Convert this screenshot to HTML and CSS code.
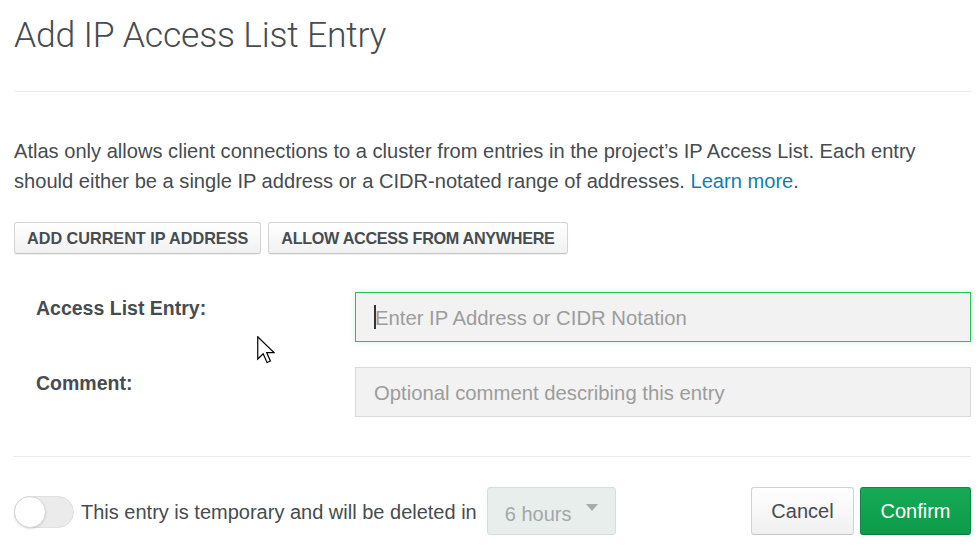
FILE: index.html
```html
<!DOCTYPE html>
<html>
<head>
<meta charset="utf-8">
<link rel="stylesheet" href="styles.css">
</head>
<body>
<div class="modal">
  <h1 class="title">Add IP Access List Entry</h1>
  <hr class="divider">
  <p class="desc">Atlas only allows client connections to a cluster from entries in the project’s IP Access List. Each entry should either be a single IP address or a CIDR-notated range of addresses. <a class="link" href="#">Learn more</a>.</p>
  <div class="actions">
    <button class="btn">ADD CURRENT IP ADDRESS</button>
    <button class="btn btn-narrow">ALLOW ACCESS FROM ANYWHERE</button>
  </div>
  <div class="form">
    <div class="row">
      <label class="label">Access List Entry:</label>
      <div class="field focused"><span class="caret"></span><span class="ph">Enter IP Address or CIDR Notation</span></div>
    </div>
    <div class="row">
      <label class="label">Comment:</label>
      <div class="field"><span class="ph">Optional comment describing this entry</span></div>
    </div>
  </div>
  <hr class="divider">
  <div class="footer">
    <div class="temp">
      <span class="toggle"><span class="knob"></span></span>
      <span class="temp-text">This entry is temporary and will be deleted in</span>
      <span class="select"><span class="sel-val">6 hours</span><span class="sel-arrow"></span></span>
    </div>
    <div class="footer-btns">
      <button class="fbtn cancel">Cancel</button>
      <button class="fbtn confirm">Confirm</button>
    </div>
  </div>
  <svg class="pointer" width="18" height="28" viewBox="0 0 18 28"><path d="M0.75 0.75 L0.75 23 L6.2 17.8 L10 26.5 L13.4 25 L9.7 16.6 L17 16.6 Z" fill="#fff" stroke="#000" stroke-width="1.2" stroke-linejoin="miter"/></svg>
</div>
</body>
</html>
```
FILE: styles.css
```css
* { box-sizing: border-box; }
html, body { margin: 0; padding: 0; background: #fff; }
body {
  font-family: "Liberation Sans", Arial, sans-serif;
  color: #494c4f;
  width: 979px;
  height: 546px;
  overflow: hidden;
}
.modal {
  position: relative;
  padding: 0 8px 0 14px;
}
.title {
  margin: 0;
  padding-top: 14px;
  height: 91px;
  font-family: "Roboto", "Liberation Sans", sans-serif;
  font-weight: 300;
  font-size: 35.5px;
  line-height: 42px;
  color: #464c4f;
  letter-spacing: -0.2px;
}
.divider {
  margin: 0;
  border: 0;
  border-top: 1px solid #e7eaea;
  height: 0;
}
.desc {
  margin: 0;
  padding-top: 44px;
  max-width: 930px;
  font-size: 20.1px;
  line-height: 30px;
  color: #464c4f;
}
.link { color: #0f7fae; text-decoration: none; }
.actions {
  display: flex;
  gap: 7px;
  margin-top: 26px;
}
.btn {
  height: 32px;
  padding: 0 12px;
  font-family: "Liberation Sans", Arial, sans-serif;
  font-weight: bold;
  font-size: 16.2px;
  color: #464c4f;
  background: linear-gradient(#ffffff, #f1f1f1);
  border: 1px solid #d4d4d4;
  border-bottom-color: #c6c6c6;
  border-radius: 3px;
  box-shadow: 0 1px 1px rgba(0,0,0,0.06);
}
.btn-narrow { letter-spacing: -0.3px; }
.form {
  padding: 38px 0 39px 22px;
  display: flex;
  flex-direction: column;
  gap: 25px;
}
.row {
  display: flex;
  align-items: flex-start;
}
.label {
  width: 319px;
  flex: none;
  font-weight: bold;
  font-size: 19.5px;
  line-height: 22px;
  padding-top: 5px;
  color: #464c4f;
}
.field {
  flex: 1;
  height: 50px;
  background: #f2f2f2;
  border: 1px solid #dadada;
  display: flex;
  align-items: center;
  padding-left: 18px;
  padding-top: 2px;
  font-size: 20.3px;
}
.field.focused {
  border-color: #1fc85a;
  box-shadow: 0 0 5px rgba(60,200,90,0.25);
}
.caret {
  width: 2px;
  height: 24px;
  background: #333;
  margin-right: -1px;
  margin-top: -2px;
}
.ph { color: #9c9c9c; font-family: "Liberation Sans", Arial, sans-serif; }
.footer {
  display: flex;
  justify-content: space-between;
  align-items: center;
  padding-top: 30px;
}
.temp {
  display: flex;
  align-items: center;
}
.toggle {
  width: 60px;
  height: 32px;
  border-radius: 16px;
  background: #ebebeb;
  border: 1px solid #e0e0e0;
  position: relative;
  display: block;
  margin-top: 2px;
}
.knob {
  position: absolute;
  left: -1px;
  top: -1px;
  width: 32px;
  height: 32px;
  border-radius: 50%;
  background: #fff;
  border: 1px solid #d6d6d6;
  box-shadow: 0 1px 2px rgba(0,0,0,0.12);
}
.temp-text {
  margin-left: 7px;
  font-size: 20px;
  color: #464c4f;
  margin-top: 3px;
}
.select {
  margin-left: 10px;
  width: 129px;
  height: 48px;
  background: #e8eeec;
  border: 1px solid #d6dedb;
  border-radius: 3px;
  position: relative;
  display: flex;
  align-items: center;
  padding-left: 17px;
  padding-top: 6px;
}
.sel-val { color: #a4a7a8; font-size: 20px; }
.sel-arrow {
  position: absolute;
  right: 17px;
  top: 16px;
  width: 0;
  height: 0;
  border-left: 6px solid transparent;
  border-right: 6px solid transparent;
  border-top: 7px solid #a7abad;
}
.footer-btns {
  display: flex;
  gap: 6px;
}
.fbtn {
  height: 48px;
  border-radius: 3px;
  font-family: "Liberation Sans", Arial, sans-serif;
  font-size: 20px;
  padding: 0;
}
.cancel {
  width: 103px;
  background: linear-gradient(#ffffff, #f0f0f0);
  border: 1px solid #d2d2d2;
  border-bottom-color: #c4c4c4;
  color: #464c4f;
}
.confirm {
  width: 111px;
  background: linear-gradient(#16aa56, #0c9b4a);
  border: 1px solid #0a8b45;
  border-bottom-color: #087a3c;
  color: #fff;
}
.pointer {
  position: absolute;
  left: 257px;
  top: 336px;
}
```
